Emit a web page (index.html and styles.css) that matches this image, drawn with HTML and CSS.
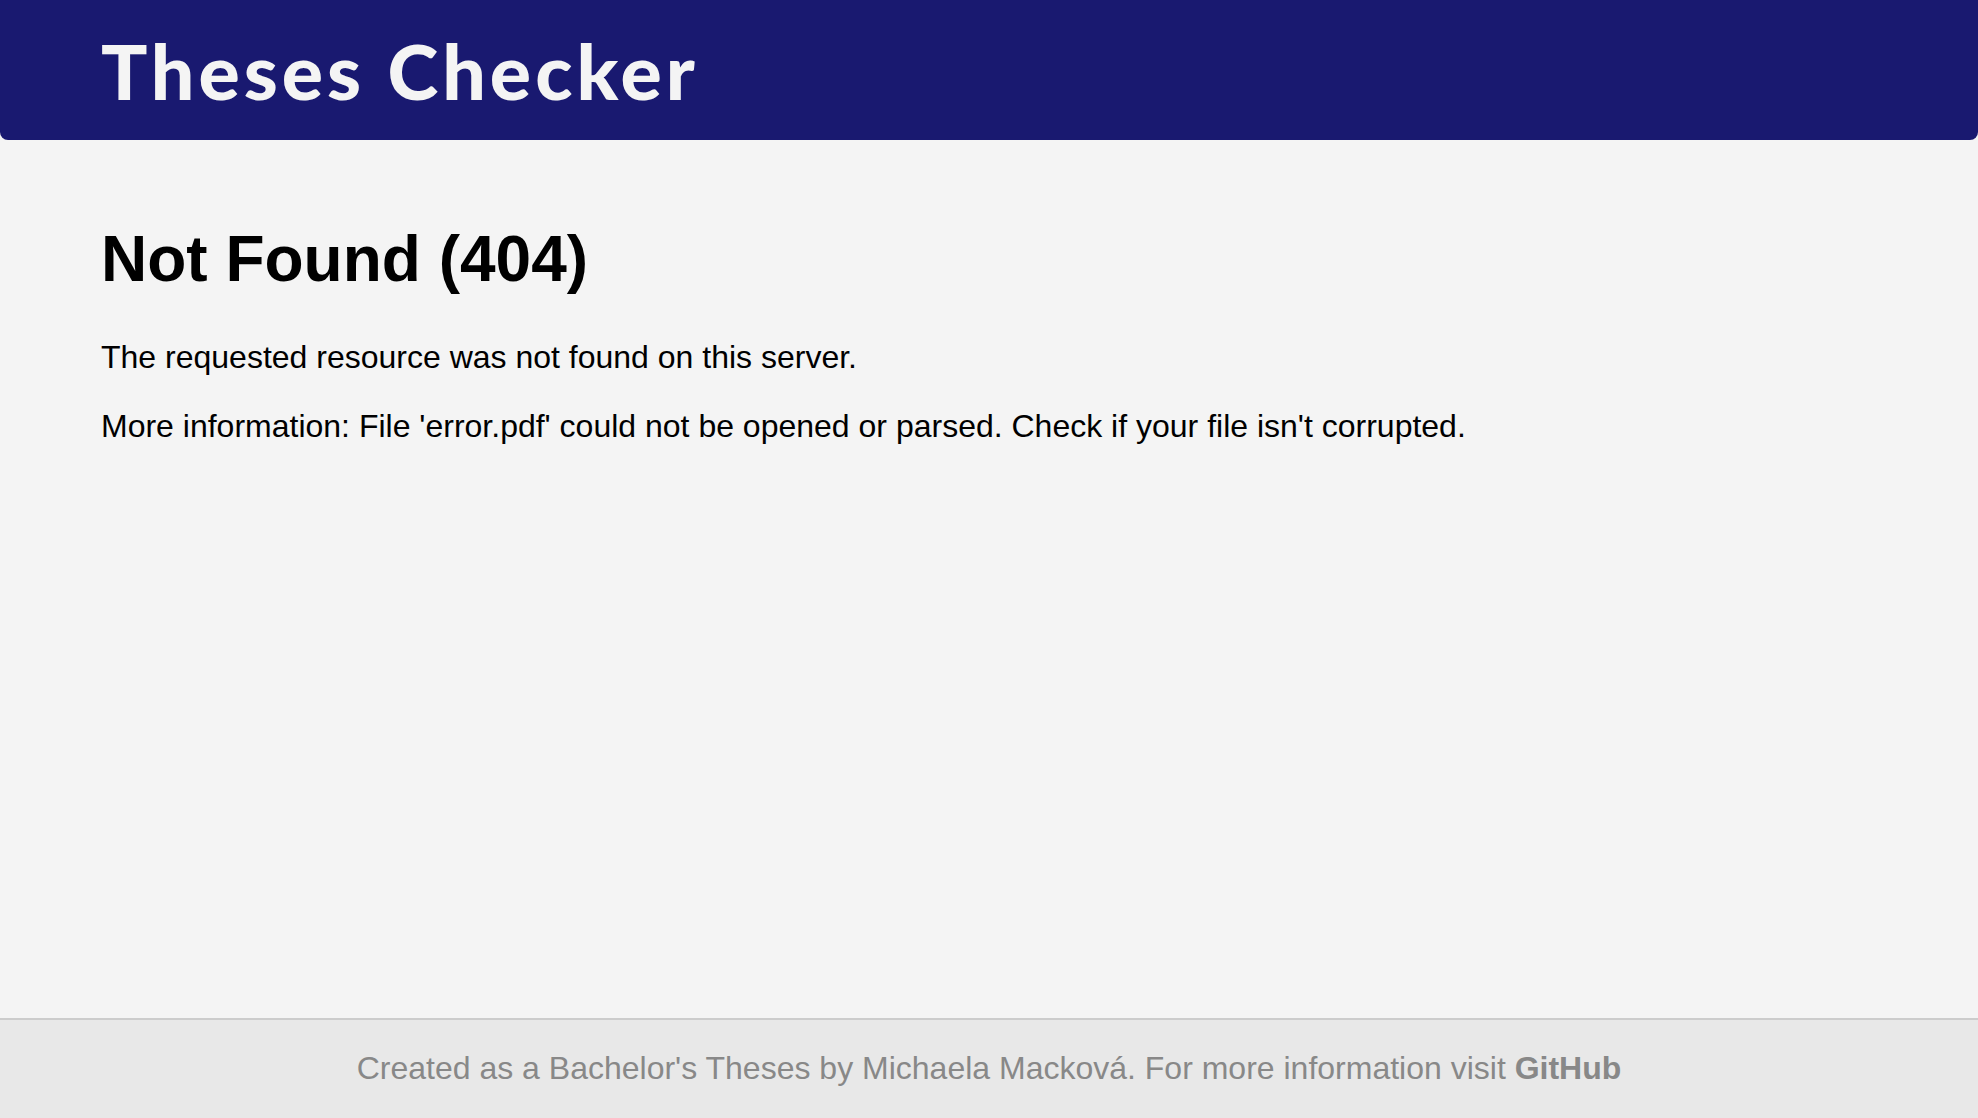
FILE: index.html
```html
<!DOCTYPE html>
<html lang="en">
<head>
<meta charset="utf-8">
<title>Not Found (404)</title>
<link rel="stylesheet" href="styles.css">
</head>
<body>
<div class="page">
  <header class="site-header">
    <div class="brand">Theses Checker</div>
  </header>
  <main class="content">
    <h1 class="error-title">Not Found (404)</h1>
    <p class="error-text">The requested resource was not found on this server.</p>
    <p class="error-text">More information: File 'error.pdf' could not be opened or parsed. Check if your file isn't corrupted.</p>
  </main>
  <footer class="site-footer">
    Created as a Bachelor's Theses by Michaela Macková. For more information visit <a class="footer-link" href="#">GitHub</a>
  </footer>
</div>
</body>
</html>
```

FILE: styles.css
```css
html, body {
  margin: 0;
  padding: 0;
}

body {
  background: #f4f4f4;
  font-family: "Liberation Sans", Arial, sans-serif;
  font-size: 32px;
  color: #000;
}

.page {
  min-height: 100vh;
  display: flex;
  flex-direction: column;
}

.site-header {
  height: 140px;
  background: #191970;
  border-radius: 0 0 8px 8px;
  display: flex;
  align-items: center;
  padding-left: 101px;
}

.brand {
  font-family: Lato, "Open Sans", sans-serif;
  font-weight: 900;
  font-size: 77px;
  line-height: 1.2;
  letter-spacing: 4px;
  color: #f4f4f4;
}

.content {
  flex: 1;
  padding: 39px 101px 0;
}

.error-title {
  font-size: 64px;
  font-weight: 700;
  margin: 43px 0;
}

.error-text {
  margin: 32px 0;
}

.site-footer {
  background: #e8e8e8;
  border-top: 2px solid #cccccc;
  color: #888888;
  text-align: center;
  padding: 30px 0 31px;
}

.footer-link {
  color: #888888;
  font-weight: 700;
  text-decoration: none;
}
```
